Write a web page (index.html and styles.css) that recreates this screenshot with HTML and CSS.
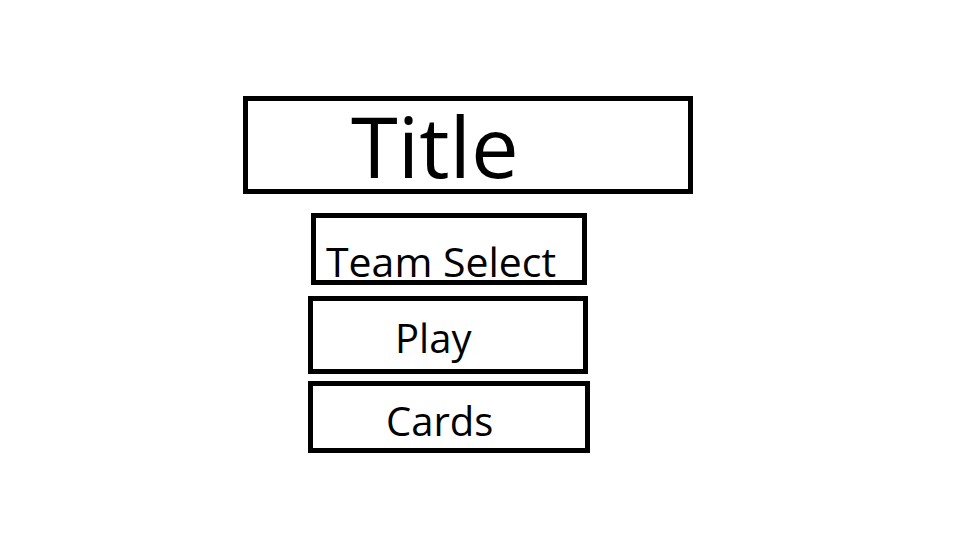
FILE: index.html
```html
<!DOCTYPE html>
<html lang="en">
<head>
    <meta charset="UTF-8">
    <meta name="viewport" content="width=device-width, initial-scale=1.0">
    <title>Title</title>
    <link rel="stylesheet" href="styles.css">
</head>
<body>
    <div class="menu">
        <h1 class="title">Title</h1>
        <button class="menu-button" id="teamSelectButton"><span>Team Select</span></button>
        <button class="menu-button" id="playButton"><span>Play</span></button>
        <button class="menu-button" id="cardsButton"><span>Cards</span></button>
    </div>
</body>
</html>
```

FILE: styles.css
```css
* {
    margin: 0;
    padding: 0;
    box-sizing: border-box;
}

html, body {
    width: 100%;
    height: 100%;
    background-color: #FFFFFF;
    font-family: "Open Sans", "Liberation Sans", sans-serif;
    color: #000000;
}

.menu {
    display: flex;
    flex-direction: column;
    align-items: flex-start;
    padding-top: 96px;
    padding-left: 243px;
}

.title {
    width: 450px;
    height: 98px;
    border: 5px solid #000000;
    font-size: 85px;
    font-weight: normal;
    line-height: 1;
    padding-top: 2px;
    padding-left: 103px;
}

.menu-button {
    display: flex;
    align-items: flex-start;
    justify-content: flex-start;
    border: 5px solid #000000;
    background-color: #FFFFFF;
    color: #000000;
    font-family: "Open Sans", "Liberation Sans", sans-serif;
    font-size: 40px;
    line-height: 1;
    text-align: left;
    cursor: pointer;
}

.menu-button > span {
    white-space: nowrap;
}

#teamSelectButton {
    width: 276px;
    height: 72px;
    margin-top: 19px;
    margin-left: 68px;
    padding-top: 23px;
    padding-left: 10px;
    font-size: 41px;
}

#playButton {
    width: 280px;
    height: 78px;
    margin-top: 11px;
    margin-left: 65px;
    padding-top: 17px;
    padding-left: 82px;
}

#cardsButton {
    width: 282px;
    height: 72px;
    margin-top: 7px;
    margin-left: 65px;
    padding-top: 15px;
    padding-left: 73px;
}
```
